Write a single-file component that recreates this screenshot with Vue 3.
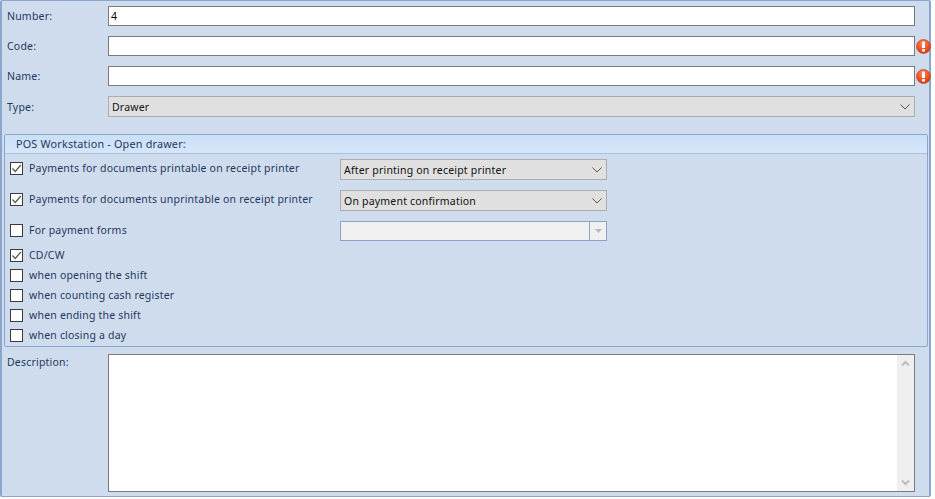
<script setup>
const forms = [
  { label: 'Payments for documents printable on receipt printer', checked: true, value: 'After printing on receipt printer' },
  { label: 'Payments for documents unprintable on receipt printer', checked: true, value: 'On payment confirmation' },
]
const checks = [
  { label: 'CD/CW', checked: true },
  { label: 'when opening the shift', checked: false },
  { label: 'when counting cash register', checked: false },
  { label: 'when ending the shift', checked: false },
  { label: 'when closing a day', checked: false },
]
</script>

<template>
  <main class="panel">
    <div class="field">
      <label class="label">Number:</label>
      <input class="text" value="4" />
    </div>
    <div class="field">
      <label class="label">Code:</label>
      <input class="text" value="" />
      <svg class="err" width="15" height="15" viewBox="0 0 15 15">
        <defs>
          <radialGradient id="eg" cx="45%" cy="30%" r="75%">
            <stop offset="0" stop-color="#fd8a5c" />
            <stop offset="0.6" stop-color="#f0501f" />
            <stop offset="1" stop-color="#c9340f" />
          </radialGradient>
        </defs>
        <circle cx="7.5" cy="7.5" r="7" fill="url(#eg)" stroke="#bd3f1e" stroke-width="0.6" />
        <rect x="6" y="2.6" width="3" height="6.4" rx="0.5" fill="#fff" />
        <rect x="6" y="10" width="3" height="2.6" rx="0.4" fill="#fff" />
      </svg>
    </div>
    <div class="field">
      <label class="label">Name:</label>
      <input class="text" value="" />
      <svg class="err" width="15" height="15" viewBox="0 0 15 15">
        <circle cx="7.5" cy="7.5" r="7" fill="url(#eg)" stroke="#bd3f1e" stroke-width="0.6" />
        <rect x="6" y="2.6" width="3" height="6.4" rx="0.5" fill="#fff" />
        <rect x="6" y="10" width="3" height="2.6" rx="0.4" fill="#fff" />
      </svg>
    </div>
    <div class="field">
      <label class="label type-label">Type:</label>
      <div class="combo wide">
        <span>Drawer</span>
        <svg class="chev" width="10" height="6" viewBox="0 0 10 6"><path d="M.5.5L5 5 9.500.5" fill="none" stroke="#555" stroke-width="1" /></svg>
      </div>
    </div>

    <section class="group">
      <header class="group-head">POS Workstation - Open drawer:</header>
      <div class="group-body">
        <div v-for="f in forms" :key="f.label" class="opt-row">
          <div class="check-line">
            <span class="box">
              <svg v-if="f.checked" width="11" height="11" viewBox="0 0 11 11"><path d="M1.5 5.5l2.8 3L9.8 2" fill="none" stroke="#5a5a5a" stroke-width="1.3" /></svg>
            </span>
            <span class="check-text">{{ f.label }}</span>
          </div>
          <div class="combo small">
            <span>{{ f.value }}</span>
            <svg class="chev" width="10" height="6" viewBox="0 0 10 6"><path d="M.5.5L5 5 9.500.5" fill="none" stroke="#555" stroke-width="1" /></svg>
          </div>
        </div>
        <div class="opt-row last">
          <div class="check-line">
            <span class="box"></span>
            <span class="check-text">For payment forms</span>
          </div>
          <div class="combo disabled">
            <span class="fill"></span>
            <span class="drop"><svg width="7" height="4" viewBox="0 0 7 4"><path d="M0 0h7L3.500 4z" fill="#b4b8bd" /></svg></span>
          </div>
        </div>
        <div v-for="c in checks" :key="c.label" class="check-row">
          <span class="box">
            <svg v-if="c.checked" width="11" height="11" viewBox="0 0 11 11"><path d="M1.5 5.5l2.8 3L9.8 2" fill="none" stroke="#5a5a5a" stroke-width="1.3" /></svg>
          </span>
          <span class="check-text">{{ c.label }}</span>
        </div>
      </div>
    </section>

    <div class="field desc">
      <label class="label desc-label">Description:</label>
      <div class="memo">
        <div class="memo-text"></div>
        <div class="scroll">
          <svg width="9" height="7" viewBox="0 0 9 7"><path d="M1 5.5l3.5-3.5L8 5.5" fill="none" stroke="#bdbdbd" stroke-width="2" /></svg>
          <svg width="9" height="7" viewBox="0 0 9 7"><path d="M1 1.5L4.5 5 8 1.5" fill="none" stroke="#bdbdbd" stroke-width="2" /></svg>
        </div>
      </div>
    </div>
  </main>
</template>

<style scoped>
.panel {
  box-sizing: border-box;
  width: 931px;
  height: 497px;
  background: #cfdcee;
  border: 1px solid #8aa6cc;
  border-left-width: 2px;
  border-right-width: 2px;
  border-radius: 2px;
  padding: 5px 0 0 5px;
  font-family: "Noto Sans", sans-serif;
  font-size: 10.5px;
  letter-spacing: 0.2px;
  color: #1e395b;
}
.field {
  display: flex;
  align-items: flex-start;
  height: 20px;
  margin-bottom: 10px;
}
.label {
  width: 101px;
  flex: none;
  line-height: 20px;
}
.type-label {
  margin-top: 1px;
}
.text {
  box-sizing: border-box;
  width: 807px;
  height: 20px;
  flex: none;
  margin: 0;
  padding: 0 2px;
  border: 1px solid #7b7b7b;
  background: #fff;
  outline: none;
  font: inherit;
  letter-spacing: inherit;
  color: #000;
}
.err {
  flex: none;
  margin: 3px 0 0 1px;
}
.combo {
  box-sizing: border-box;
  height: 21px;
  display: flex;
  align-items: center;
  justify-content: space-between;
  flex: none;
  background: #e0e0e0;
  border: 1px solid #adadad;
  padding: 0 4px 0 3px;
  color: #111;
}
.wide { width: 807px; }
.small { width: 267px; }
.chev { flex: none; }
.group {
  box-sizing: border-box;
  width: 924px;
  height: 213px;
  margin: 18px 0 0 -3px;
  border: 1px solid #8aa6cc;
  border-radius: 2px;
}
.group-head {
  height: 18px;
  line-height: 18px;
  padding-left: 11px;
  background: linear-gradient(#cbdff7, #d6e6fa);
  border-bottom: 1px solid #a9c1e0;
  font-size: 10.8px;
}
.group-body {
  padding: 5px 0 0 5px;
}
.opt-row {
  display: flex;
  align-items: flex-start;
  height: 21px;
  margin-bottom: 10px;
}
.opt-row.last {
  height: 20px;
  margin-bottom: 4px;
}
.check-line {
  display: flex;
  align-items: center;
  width: 330px;
  flex: none;
  height: 18px;
}
.check-row {
  display: flex;
  align-items: center;
  height: 20px;
}
.box {
  box-sizing: border-box;
  width: 13px;
  height: 13px;
  flex: none;
  display: flex;
  align-items: center;
  justify-content: center;
  background: #fff;
  border: 1px solid #3a3a3a;
  margin-right: 6px;
}
.disabled {
  width: 267px;
  height: 20px;
  padding: 0;
  background: #f0f0f0;
  border-color: #8aa3c8;
}
.fill { flex: 1; }
.drop {
  width: 16px;
  height: 100%;
  display: flex;
  align-items: center;
  justify-content: center;
  border-left: 1px solid #8aa3c8;
}
.desc {
  height: 138px;
  margin: 7px 0 0;
}
.desc-label {
  margin-top: -2px;
}
.memo {
  box-sizing: border-box;
  width: 807px;
  height: 138px;
  flex: none;
  display: flex;
  background: #fff;
  border: 1px solid #7b7b7b;
}
.memo-text { flex: 1; }
.scroll {
  width: 17px;
  display: flex;
  flex-direction: column;
  justify-content: space-between;
  align-items: center;
  padding: 5px 0;
  background: #efefef;
  box-sizing: border-box;
}
</style>

<style>
html, body { background: #fff; }
</style>
